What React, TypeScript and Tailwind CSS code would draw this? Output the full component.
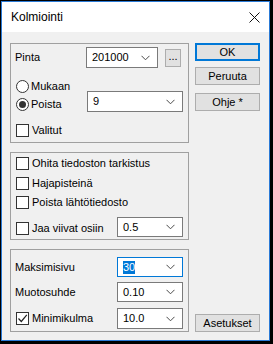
const font = { fontFamily: '"Liberation Sans", Arial, sans-serif' };

const Chevron = () => (
  <svg width="9" height="6" viewBox="0 0 9 6" className="shrink-0">
    <path d="M0.5 0.8 L4.5 4.8 L8.5 0.8" fill="none" stroke="#4a4a4a" strokeWidth="1" />
  </svg>
);

const Combo = ({
  value,
  className,
  focused,
}: {
  value: string;
  className: string;
  focused?: boolean;
}) => (
  <div
    className={`flex items-center justify-between bg-white border pl-[5px] pr-[7px] ${
      focused ? "border-[#0078d7]" : "border-[#7a7a7a]"
    } ${className}`}
  >
    {focused ? (
      <span className="bg-[#0078d7] text-white leading-[13px]">{value}</span>
    ) : (
      <span>{value}</span>
    )}
    <Chevron />
  </div>
);

const CheckBox = ({ checked }: { checked?: boolean }) => (
  <div className="w-[13px] h-[13px] border border-[#333] bg-white flex items-center justify-center shrink-0">
    {checked && (
      <svg width="11" height="11" viewBox="0 0 11 11">
        <path d="M1.5 5.5 L4.3 8.5 L9.8 1.8" fill="none" stroke="#222" strokeWidth="1.2" />
      </svg>
    )}
  </div>
);

const Radio = ({ checked }: { checked?: boolean }) => (
  <div className="w-[13px] h-[13px] rounded-full border border-[#333] bg-white flex items-center justify-center shrink-0">
    {checked && <div className="w-[7px] h-[7px] rounded-full bg-[#333]" />}
  </div>
);

const Check = ({ label, checked, className }: { label: string; checked?: boolean; className?: string }) => (
  <div className={`flex items-center h-[16px] gap-[3px] ${className ?? ""}`}>
    <CheckBox checked={checked} />
    <span>{label}</span>
  </div>
);

const Button = ({ label, def, className }: { label: string; def?: boolean; className?: string }) => (
  <div
    className={`h-[18px] w-[65px] flex items-center justify-center bg-[#e1e1e1] ${
      def ? "border-2 border-[#0078d7]" : "border border-[#adadad]"
    } ${className ?? ""}`}
  >
    {label}
  </div>
);

export default function App() {
  return (
    <div className="w-[273px] h-[344px] bg-black pl-[1px] pt-[1px] overflow-hidden text-[11px] text-black" style={font}>
      <div className="w-[269px] h-[340px] border border-[#2a7ad6] flex flex-col">
        {/* Title bar */}
        <div className="h-[30px] bg-white flex items-center justify-between pl-[9px] pr-[9px] shrink-0">
          <span className="text-[12px]">Kolmiointi</span>
          <svg width="11" height="11" viewBox="0 0 11 11">
            <path d="M0.5 0.5 L10.5 10.5 M10.5 0.5 L0.5 10.5" stroke="#111" strokeWidth="1" />
          </svg>
        </div>

        {/* Body */}
        <div className="flex-1 bg-[#f0f0f0] flex pl-[8px] pt-[11px] pb-[8px] gap-[6px]">
          <div className="w-[179px] flex flex-col">
            {/* Group 1 */}
            <div className="h-[100px] border border-[#a0a0a0] pl-[5px] pr-[5px] pt-[3px]">
              <div className="flex items-center h-[21px]">
                <span className="w-[71px] -ml-[1px] pl-0">Pinta</span>
                <Combo value="201000" className="w-[72px] h-[21px]" />
                <div className="ml-[7px] w-[16px] h-[18px] bg-[#e1e1e1] border border-[#adadad] flex items-center justify-center leading-none pb-[3px]">
                  ...
                </div>
              </div>
              <div className="flex items-end mt-[10px]">
                <div className="w-[71px] flex flex-col">
                  <div className="flex items-center h-[16px] gap-[2px]">
                    <Radio />
                    <span>Mukaan</span>
                  </div>
                  <div className="flex items-center h-[16px] gap-[2px] mt-[2px]">
                    <Radio checked />
                    <span>Poista</span>
                  </div>
                </div>
                <Combo value="9" className="w-[96px] h-[21px]" />
              </div>
              <Check label="Valitut" className="mt-[10px]" />
            </div>

            {/* Group 2 */}
            <div className="h-[88px] mt-[9px] border border-[#a0a0a0] pl-[5px] pr-[5px] pt-[2px]">
              <Check label="Ohita tiedoston tarkistus" />
              <Check label="Hajapisteinä" className="mt-[4px]" />
              <Check label="Poista lähtötiedosto" className="mt-[3px]" />
              <div className="flex items-center justify-between h-[20px] mt-[7px]">
                <Check label="Jaa viivat osiin" className="mt-[3px]" />
                <Combo value="0.5" className="w-[66px] h-[20px]" />
              </div>
            </div>

            {/* Group 3 */}
            <div className="h-[83px] mt-[9px] border border-[#a0a0a0] pl-[5px] pr-[5px] pt-[7px]">
              <div className="flex items-center justify-between h-[20px]">
                <span className="-ml-[1px]">Maksimisivu</span>
                <Combo value="30" focused className="w-[66px] h-[20px]" />
              </div>
              <div className="flex items-center justify-between h-[20px] mt-[5px]">
                <span className="-ml-[1px]">Muotosuhde</span>
                <Combo value="0.10" className="w-[66px] h-[20px]" />
              </div>
              <div className="flex items-center justify-between h-[21px] mt-[6px]">
                <Check label="Minimikulma" checked />
                <Combo value="10.0" className="w-[66px] h-[21px]" />
              </div>
            </div>
          </div>

          {/* Buttons */}
          <div className="flex flex-col">
            <Button label="OK" def />
            <Button label="Peruuta" className="mt-[6px]" />
            <Button label="Ohje *" className="mt-[8px]" />
            <Button label="Asetukset" className="mt-auto" />
          </div>
        </div>
      </div>
    </div>
  );
}
